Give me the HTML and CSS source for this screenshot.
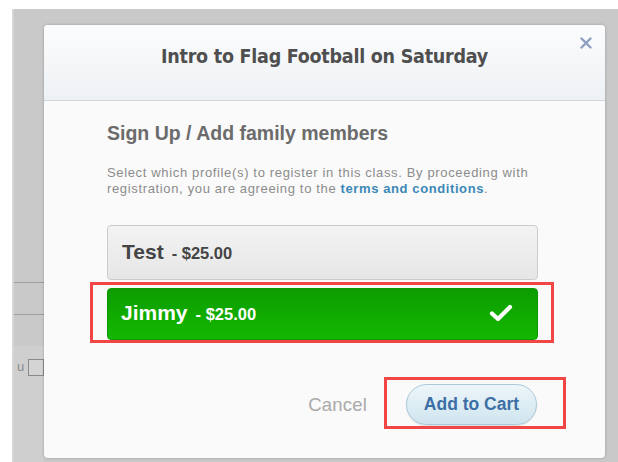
FILE: index.html
```html
<!DOCTYPE html>
<html lang="en">
<head>
<meta charset="utf-8">
<title>Intro to Flag Football on Saturday</title>
<link rel="stylesheet" href="styles.css">
</head>
<body>
<div class="backdrop">
  <div class="page">
    <div class="page-top"></div>
    <div class="page-row"></div>
    <div class="page-row"></div>
    <div class="page-lower">
      <span class="page-label">u</span><span class="page-check"></span>
    </div>
  </div>

  <div class="modal" role="dialog" aria-labelledby="modal-title">
    <div class="modal-header">
      <h2 id="modal-title" class="modal-title">Intro to Flag Football on Saturday</h2>
      <svg class="modal-close" width="12" height="12" viewBox="0 0 12 12" aria-label="Close">
        <path d="M1.5 1.5 L10.5 10.5 M10.5 1.5 L1.5 10.5" stroke="#8d9ec0" stroke-width="2.4" stroke-linecap="round"/>
      </svg>
    </div>
    <div class="modal-body">
      <h3 class="section-title">Sign Up / Add family members</h3>
      <p class="section-note">Select which profile(s) to register in this class. By proceeding with registration, you are agreeing to the <a class="terms" href="#">terms and conditions</a>.</p>
      <div class="profiles">
        <button class="profile">
          <span class="profile-name">Test</span><span class="profile-price">- $25.00</span>
        </button>
        <button class="profile profile-selected">
          <span class="profile-name">Jimmy</span><span class="profile-price">- $25.00</span>
          <svg class="profile-check" width="24" height="18" viewBox="0 0 24 18" aria-hidden="true">
            <path d="M3 9.5 L9 15 L21 3" fill="none" stroke="#fff" stroke-width="4.2" stroke-linecap="round" stroke-linejoin="round"/>
          </svg>
        </button>
        <span class="highlight highlight-profile"></span>
      </div>
    </div>
    <div class="modal-footer">
      <a class="btn-cancel" href="#">Cancel</a>
      <span class="cart-wrap">
        <button class="btn-cart">Add to Cart</button>
        <span class="highlight highlight-cart"></span>
      </span>
    </div>
  </div>
</div>
</body>
</html>
```

FILE: styles.css
```css
html, body {
  margin: 0;
  padding: 0;
  background: #ffffff;
  width: 618px;
  height: 462px;
  overflow: hidden;
}

body {
  font-family: "Liberation Sans", Arial, sans-serif;
}

/* dimmed page behind the dialog */
.backdrop {
  position: relative;
  margin: 9px 0 0 12px;
  height: 453px;
  background: #c9c9c9;
  border-left: 2px solid #d6d6d6;
}

.page {
  display: flex;
  flex-direction: column;
  width: 30px;
}

.page-top {
  height: 273px;
}

.page-row {
  height: 31px;
  border-top: 1px solid #9e9e9e;
}

.page-lower {
  height: 111px;
  background: #cfcfcf;
  display: flex;
  align-items: flex-start;
  padding-top: 13px;
  padding-left: 3px;
  gap: 4px;
}

.page-label {
  font-size: 13px;
  color: #8a8a8a;
  line-height: 16px;
}

.page-check {
  width: 14px;
  height: 15px;
  border: 1px solid #8a8a8a;
  background: #d4d4d4;
  margin-right: -10px;
}

/* dialog */
.modal {
  position: absolute;
  left: 30px;
  top: 16px;
  width: 561px;
  height: 433px;
  background: #fafafa;
  border-radius: 4px;
  box-shadow: 0 0 3px rgba(0, 0, 0, 0.25);
  display: flex;
  flex-direction: column;
  overflow: hidden;
}

.modal-header {
  position: relative;
  height: 75px;
  border-bottom: 1px solid #d3d8de;
  background: linear-gradient(#fbfcfd, #eef1f4);
  display: flex;
  align-items: center;
  justify-content: center;
}

.modal-title {
  margin: 0 0 11px;
  font-family: "DejaVu Sans Condensed", "DejaVu Sans", sans-serif;
  font-weight: bold;
  font-size: 19.5px;
  line-height: 24px;
  color: #4f4f4f;
  letter-spacing: -0.25px;
}

.modal-close {
  position: absolute;
  right: 13px;
  top: 12px;
}

.modal-body {
  padding: 21px 67px 0 63px;
}

.section-title {
  margin: 0;
  font-size: 19.5px;
  line-height: 22px;
  font-weight: bold;
  color: #6b6b6b;
}

.section-note {
  margin: 21px 0 0;
  font-size: 13px;
  line-height: 16px;
  letter-spacing: 0.65px;
  color: #8c8c8c;
}

.terms {
  color: #3b88b8;
  font-weight: bold;
  letter-spacing: 0.6px;
  text-decoration: none;
}

.profiles {
  position: relative;
  display: flex;
  flex-direction: column;
  gap: 8px;
  margin-top: 28px;
}

.profile {
  display: flex;
  align-items: center;
  height: 55px;
  padding: 0 0 2px 14px;
  border: 1px solid #cccccc;
  border-radius: 4px;
  background: linear-gradient(#f3f3f3, #e6e6e6);
  font-family: "Liberation Sans", Arial, sans-serif;
  color: #444444;
  text-align: left;
  cursor: pointer;
}

.profile-name {
  font-size: 21px;
  font-weight: bold;
}

.profile-price {
  font-size: 16.5px;
  font-weight: bold;
  margin-left: 8px;
  padding-top: 3px;
}

.profile-selected {
  height: 52px;
  border-color: #0c9600;
  background: linear-gradient(#0d9c00, #14b800);
  color: #ffffff;
  padding-left: 13px;
}

.profile-check {
  margin-left: auto;
  margin-right: 24px;
}

.highlight {
  position: absolute;
  border: 3px solid #f04646;
  pointer-events: none;
}

.highlight-profile {
  left: -17px;
  top: 57px;
  width: 458px;
  height: 55px;
}

/* footer actions */
.modal-footer {
  margin-top: auto;
  display: flex;
  align-items: center;
  justify-content: flex-end;
  padding: 0 68px 33px 0;
}

.btn-cancel {
  font-size: 18.5px;
  letter-spacing: 0.2px;
  color: #a9a9a9;
  text-decoration: none;
  margin-right: 39px;
}

.cart-wrap {
  position: relative;
  display: inline-flex;
}

.btn-cart {
  width: 131px;
  height: 41px;
  border: 1px solid #a9c8d8;
  border-radius: 21px;
  background: linear-gradient(#edf6fa, #cfe4ee);
  box-shadow: 0 1px 1px rgba(0, 0, 0, 0.12);
  font-family: "Liberation Sans", Arial, sans-serif;
  font-size: 17.5px;
  font-weight: bold;
  color: #3c6fa6;
  cursor: pointer;
}

.highlight-cart {
  left: -22px;
  top: -7px;
  width: 176px;
  height: 46px;
}
```
